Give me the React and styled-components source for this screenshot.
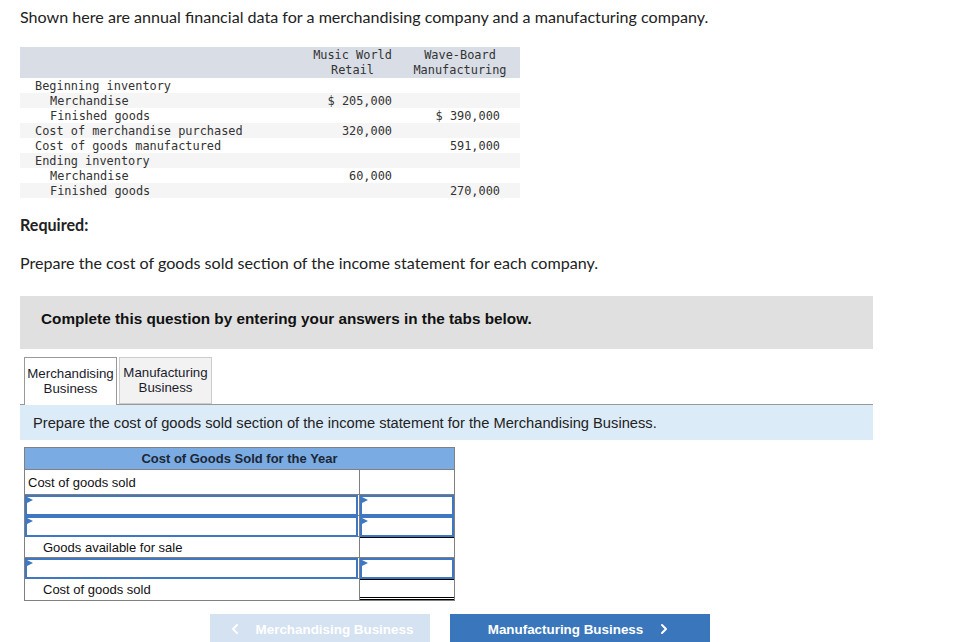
import React from "react";
import styled, { createGlobalStyle } from "styled-components";
import { ChevronLeft, ChevronRight } from "lucide-react";

const GlobalStyle = createGlobalStyle`
  html, body {
    margin: 0;
    padding: 0;
    background: #fff;
  }
  body {
    font-family: Lato, "Liberation Sans", sans-serif;
    color: #222;
  }
`;

const Page = styled.div`
  padding: 7px 20px 0 20px;
  width: 853px;
`;

const Para = styled.p`
  margin: ${(p) => p.$margin || "0"};
  font-size: 16.1px;
  line-height: 20px;
  font-weight: ${(p) => (p.$bold ? 700 : 400)};
  color: #222;
`;

const DataTable = styled.div`
  margin-top: 20px;
  width: 500px;
  display: grid;
  grid-template-columns: 285px 95px 120px;
  font-family: "DejaVu Sans Mono", "Liberation Mono", monospace;
  font-size: 11.9px;
  line-height: 15px;
  color: #333;
`;

const HeadCell = styled.div`
  background: #d9dde6;
  text-align: center;
  padding-top: 1px;
`;

const DataCell = styled.div`
  background: ${(p) => (p.$shade ? "#f5f5f5" : "#fff")};
  white-space: pre;
  height: 15px;
  line-height: 17px;
  text-align: ${(p) => (p.$num ? "right" : "left")};
  padding-left: ${(p) => (p.$indent !== undefined ? 15 + p.$indent * 15 : 0)}px;
  padding-right: ${(p) => p.$pr || 0}px;
`;

const QuestionBox = styled.div`
  margin-top: 23px;
  background: #e0e0e0;
  padding: 13px 21px 21px 21px;
  font-family: "Liberation Sans", Arial, sans-serif;
  font-weight: 700;
  font-size: 15.3px;
  line-height: 19px;
  color: #111;
`;

const TabStrip = styled.div`
  margin-top: 8px;
  display: flex;
  gap: 2px;
  padding-left: 4px;
  border-bottom: 1px solid #999;
  height: 47px;
`;

const Tab = styled.div`
  width: 93px;
  box-sizing: border-box;
  height: ${(p) => (p.$active ? "48px" : "47px")};
  background: ${(p) => (p.$active ? "#fff" : "#f2f2f2")};
  border: 1px solid ${(p) => (p.$active ? "#999" : "#ccc")};
  border-bottom: ${(p) => (p.$active ? "none" : "1px solid #ccc")};
  display: flex;
  flex-direction: column;
  align-items: center;
  justify-content: center;
  font-family: "Liberation Sans", Arial, sans-serif;
  font-size: 13.3px;
  line-height: 15px;
  color: #1b1b2b;
  padding-bottom: 1px;
`;

const InfoBar = styled.div`
  background: #dcebf8;
  height: 35px;
  display: flex;
  align-items: center;
  padding-left: 13px;
  font-family: "Liberation Sans", Arial, sans-serif;
  font-size: 14.7px;
  color: #222;
`;

const Sheet = styled.div`
  margin: 7px 0 0 4px;
  width: 429px;
  border: 1px solid #808080;
  border-top: none;
  font-family: "Liberation Sans", Arial, sans-serif;
  font-size: 13px;
  color: #111;
`;

const SheetHead = styled.div`
  background: #7aabe3;
  height: 21px;
  display: flex;
  align-items: center;
  justify-content: center;
  font-weight: 700;
  font-size: 13px;
  color: #1c2733;
  border-top: 1px solid #808080;
`;

const Row = styled.div`
  display: grid;
  grid-template-columns: 335px 94px;
  height: ${(p) => p.$h || 20}px;
  border-top: 1px solid #808080;
`;

const Label = styled.div`
  border-right: 1px solid #808080;
  display: flex;
  align-items: center;
  padding-left: ${(p) => (p.$indent ? 18 : 3)}px;
`;

const Amount = styled.div`
  position: relative;
  box-sizing: border-box;
  border-top: ${(p) => (p.$total ? "1px solid #000" : "none")};
  border-bottom: ${(p) => (p.$double ? "3px double #000" : "none")};
`;

const EntryCell = styled.div`
  position: relative;
  padding-right: ${(p) => (p.$gap ? 1 : 0)}px;
  border-right: ${(p) => (p.$gap ? "1px solid #808080" : "none")};
`;

const Entry = styled.input`
  display: block;
  box-sizing: border-box;
  width: 100%;
  height: 100%;
  margin: 0;
  border: 2px solid #3f77c2;
  background: #fff;
  outline: none;
`;

const Marker = styled.span`
  position: absolute;
  top: 2px;
  left: 2px;
  width: 0;
  height: 0;
  border-top: 3px solid transparent;
  border-bottom: 3px solid transparent;
  border-left: 6px solid #3f77c2;
`;

const NavRow = styled.div`
  display: flex;
  gap: 20px;
  margin-top: 13px;
  padding-left: 190px;
`;

const NavButton = styled.button`
  width: ${(p) => p.$w}px;
  height: 30px;
  border: none;
  background: ${(p) => (p.disabled ? "#d5e2f1" : "#3a76bb")};
  color: #fff;
  font-family: "Liberation Sans", Arial, sans-serif;
  font-weight: 700;
  font-size: 13.4px;
  display: flex;
  align-items: center;
  justify-content: center;
  gap: 13px;
  padding: 0;
  cursor: ${(p) => (p.disabled ? "default" : "pointer")};
`;

const dataRows = [
  { label: "Beginning inventory", indent: 0 },
  { label: "Merchandise", indent: 1, a: "$ 205,000" },
  { label: "Finished goods", indent: 1, b: "$ 390,000" },
  { label: "Cost of merchandise purchased", indent: 0, a: "320,000" },
  { label: "Cost of goods manufactured", indent: 0, b: "591,000" },
  { label: "Ending inventory", indent: 0 },
  { label: "Merchandise", indent: 1, a: "60,000" },
  { label: "Finished goods", indent: 1, b: "270,000" },
];

function InputRow() {
  return (
    <Row>
      <EntryCell $gap>
        <Entry />
        <Marker />
      </EntryCell>
      <EntryCell>
        <Entry />
        <Marker />
      </EntryCell>
    </Row>
  );
}

export default function App() {
  return (
    <>
      <GlobalStyle />
      <Page>
        <Para>
          Shown here are annual financial data for a merchandising company and a manufacturing
          company.
        </Para>

        <DataTable>
          <HeadCell />
          <HeadCell>
            Music World
            <br />
            Retail
          </HeadCell>
          <HeadCell>
            Wave-Board
            <br />
            Manufacturing
          </HeadCell>
          {dataRows.map((r, i) => {
            const shade = i % 2 === 1;
            return (
              <React.Fragment key={i}>
                <DataCell $shade={shade} $indent={r.indent}>
                  {r.label}
                </DataCell>
                <DataCell $shade={shade} $num $pr={8}>
                  {r.a || ""}
                </DataCell>
                <DataCell $shade={shade} $num $pr={20}>
                  {r.b || ""}
                </DataCell>
              </React.Fragment>
            );
          })}
        </DataTable>

        <Para $bold $margin="17px 0 0 0">
          Required:
        </Para>
        <Para $margin="18px 0 0 0">
          Prepare the cost of goods sold section of the income statement for each company.
        </Para>

        <QuestionBox>Complete this question by entering your answers in the tabs below.</QuestionBox>

        <TabStrip>
          <Tab $active>
            <span>Merchandising</span>
            <span>Business</span>
          </Tab>
          <Tab>
            <span>Manufacturing</span>
            <span>Business</span>
          </Tab>
        </TabStrip>

        <InfoBar>
          Prepare the cost of goods sold section of the income statement for the Merchandising
          Business.
        </InfoBar>

        <Sheet>
          <SheetHead>Cost of Goods Sold for the Year</SheetHead>
          <Row $h={24}>
            <Label>Cost of goods sold</Label>
            <Amount />
          </Row>
          <InputRow />
          <InputRow />
          <Row>
            <Label $indent>Goods available for sale</Label>
            <Amount $total />
          </Row>
          <InputRow />
          <Row $h={21}>
            <Label $indent>Cost of goods sold</Label>
            <Amount $total $double />
          </Row>
        </Sheet>

        <NavRow>
          <NavButton $w={220} disabled>
            <ChevronLeft size={16} strokeWidth={3} />
            Merchandising Business
          </NavButton>
          <NavButton $w={260}>
            Manufacturing Business
            <ChevronRight size={16} strokeWidth={3} />
          </NavButton>
        </NavRow>
      </Page>
    </>
  );
}
